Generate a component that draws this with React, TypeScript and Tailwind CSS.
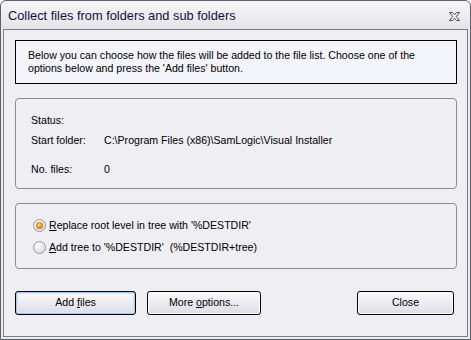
import React from "react";

const font = { fontFamily: '"Liberation Sans", Arial, sans-serif' };

function Radio({ checked }: { checked: boolean }) {
  return (
    <svg width="13" height="13" viewBox="0 0 13 13" className="shrink-0">
      <defs>
        <radialGradient id={checked ? "rg1" : "rg2"} cx="0.4" cy="0.35" r="0.7">
          <stop offset="0" stopColor="#ffffff" />
          <stop offset="1" stopColor="#d6d6dc" />
        </radialGradient>
        <radialGradient id="dot" cx="0.4" cy="0.35" r="0.7">
          <stop offset="0" stopColor="#ffd37a" />
          <stop offset="1" stopColor="#e07a10" />
        </radialGradient>
      </defs>
      <circle cx="6.5" cy="6.5" r="6" fill={`url(#${checked ? "rg1" : "rg2"})`} stroke="#9a9aa2" strokeWidth="1" />
      {checked && <circle cx="6.5" cy="6.5" r="3.2" fill="url(#dot)" stroke="#c8620a" strokeWidth="0.6" />}
    </svg>
  );
}

function Button({ children, w, def }: { children: React.ReactNode; w: string; def?: boolean }) {
  return (
    <div
      className={`${w} h-[24px] rounded-[3px] border border-black flex items-center justify-center text-[10.6px] text-black bg-gradient-to-b from-[#fafafc] to-[#dcdce6] ${
        def ? "shadow-[inset_0_0_0_1px_#a8c8f0,inset_0_0_0_2px_#d8e6f8]" : "shadow-[inset_0_0_0_1px_#ffffff]"
      }`}
    >
      {children}
    </div>
  );
}

export default function App() {
  return (
    <div className="w-[471px] h-[340px] bg-white" style={font}>
      <div className="w-[471px] h-[340px] rounded-t-[6px] border border-[#5e5e66] bg-[#ececf0] flex flex-col">
        <div className="h-[28px] shrink-0 flex items-center justify-between pl-[7px] pr-[6px] bg-gradient-to-b from-[#f6f6f8] to-[#e4e4e8] rounded-t-[6px]">
          <span className="text-[12.8px] text-[#10103a] mt-[2px]">Collect files from folders and sub folders</span>
          <svg width="13" height="11" viewBox="0 0 13 11" className="mr-[3px] mt-[2px]">
            <path
              d="M1.5 1.5 H4.5 L6.5 3.8 L8.5 1.5 H11.5 L8.3 5.5 L11.5 9.5 H8.5 L6.5 7.2 L4.5 9.5 H1.5 L4.7 5.5 Z"
              fill="#f4f4f6"
              stroke="#4a4a54"
              strokeWidth="1"
              strokeLinejoin="round"
            />
          </svg>
        </div>
        <div className="flex-1 mx-[2px] mb-[2px] border border-[#7c7c84] bg-[#eeeef3] flex flex-col pt-[10px] pl-[11px] pr-[10px] text-[10.6px]">
          <div className="h-[44px] border border-black bg-[#f4f4fc] pl-[12px] pt-[8px] leading-[13px] text-black">
            <div>Below you can choose how the files will be added to the file list. Choose one of the</div>
            <div>options below and press the 'Add files' button.</div>
          </div>

          <div className="mt-[14px] h-[91px] rounded-[4px] border border-[#8a8a92] pl-[15px] pt-[15px] leading-[13px] text-black flex flex-col">
            <div className="flex">
              <span className="w-[73px]">Status:</span>
              <span></span>
            </div>
            <div className="flex mt-[7px]">
              <span className="w-[73px]">Start folder:</span>
              <span>C:\Program Files (x86)\SamLogic\Visual Installer</span>
            </div>
            <div className="flex mt-[16px]">
              <span className="w-[73px]">No. files:</span>
              <span>0</span>
            </div>
          </div>

          <div className="mt-[14px] h-[66px] rounded-[4px] border border-[#8a8a92] pl-[17px] pt-[15px] leading-[13px] text-black flex flex-col">
            <div className="flex items-center gap-[3px]">
              <Radio checked />
              <span>
                <span className="underline">R</span>eplace root level in tree with '%DESTDIR'
              </span>
            </div>
            <div className="flex items-center gap-[3px] mt-[9px]">
              <Radio checked={false} />
              <span>
                <span className="underline">A</span>dd tree to '%DESTDIR'&nbsp; (%DESTDIR+tree)
              </span>
            </div>
          </div>

          <div className="mt-[22px] flex items-center">
            <Button w="w-[121px]" def>
              <span>
                Add <span className="underline">f</span>iles
              </span>
            </Button>
            <div className="ml-[11px]">
              <Button w="w-[114px]">
                <span>
                  More <span className="underline">o</span>ptions...
                </span>
              </Button>
            </div>
            <div className="ml-auto mr-[3px]">
              <Button w="w-[97px]">Close</Button>
            </div>
          </div>
        </div>
      </div>
    </div>
  );
}
